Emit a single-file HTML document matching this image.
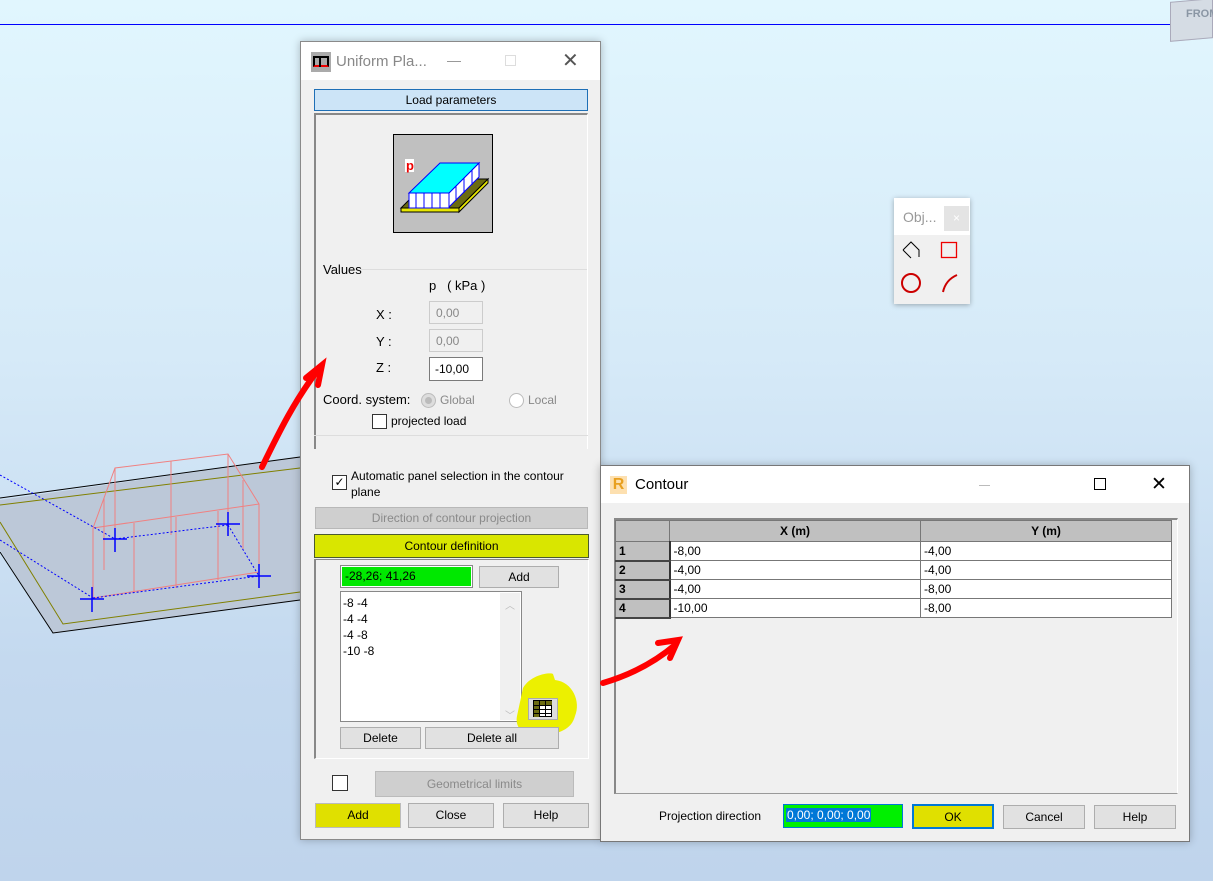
<!DOCTYPE html>
<html><head><meta charset="utf-8"><style>
*{box-sizing:border-box;margin:0;padding:0}
body{width:1213px;height:881px;overflow:hidden;position:relative;font-family:"Liberation Sans",sans-serif;font-size:12px;color:#000;background:linear-gradient(#e1f6fe 0%,#d6eaf8 40%,#c4d9ef 75%,#bfd4ec 100%)}
.a{position:absolute}
.btn{position:absolute;background:#e1e1e1;border:1px solid #adadad;text-align:center;font-size:12px}
.hdr{position:absolute;background:#cfcfcf;border:1px solid #b8b8b8;text-align:center;color:#8a8a8a}
.inp{position:absolute;background:#fff;border:1px solid #7a7a7a;font-size:12px}
table{border-collapse:collapse}
td{border:1px solid #777;height:19px;font-size:12px;padding-left:3px}
th{border:1px solid #777;background:#c0c0c0;height:21px;font-size:12px;font-weight:bold}
td.n{background:#c0c0c0;font-weight:bold;border-right:2px solid #333;border-bottom:2px solid #444}
</style></head><body>
<div class="a" style="left:0;top:24px;width:1213px;height:1px;background:#0000ff"></div>
<div class="a" style="left:1170px;top:0;width:43px;height:40px;background:#d5dce4;border:1px solid #aab;transform:skewY(-5deg)"></div>
<div class="a" style="left:1186px;top:8px;font-size:11px;font-weight:bold;color:#8a96a4">FROM</div>

<svg class="a" style="left:0;top:440px" width="310" height="200">
<polygon points="0,60 300,17 300,160 53,193 0,110" fill="#bcc8d8"/>
<polyline points="0,58 300,17" stroke="#000" fill="none"/>
<polyline points="0,65 300,28" stroke="#808000" fill="none"/>
<polyline points="0,112 53,193 300,160" stroke="#000" fill="none"/>
<polyline points="0,82 63,184 300,152" stroke="#808000" fill="none"/>
<g stroke="#f08080" fill="none">
<polyline points="93,88 115,28 228,14 259,64 259,132"/>
<polyline points="93,88 93,158 259,132"/>
<polyline points="93,88 259,64"/>
<line x1="115" y1="28" x2="115" y2="97"/><line x1="171" y1="21" x2="171" y2="95"/><line x1="228" y1="14" x2="228" y2="85"/>
<line x1="104" y1="58" x2="104" y2="130"/><line x1="243" y1="40" x2="243" y2="110"/>
<line x1="134" y1="83" x2="134" y2="153"/><line x1="176" y1="77" x2="176" y2="148"/><line x1="218" y1="71" x2="218" y2="140"/>
</g>
<g stroke="#0000ff" stroke-dasharray="2,2" fill="none">
<line x1="115" y1="99" x2="228" y2="85"/><line x1="93" y1="158" x2="259" y2="136"/><line x1="228" y1="85" x2="259" y2="136"/>
<line x1="0" y1="35" x2="115" y2="99"/><line x1="0" y1="100" x2="93" y2="158"/>
</g>
<g stroke="#0000ff" stroke-width="1.5">
<line x1="103" y1="99" x2="127" y2="99"/><line x1="115" y1="88" x2="115" y2="112"/>
<line x1="216" y1="84" x2="240" y2="84"/><line x1="228" y1="72" x2="228" y2="96"/>
<line x1="247" y1="136" x2="271" y2="136"/><line x1="259" y1="124" x2="259" y2="148"/>
<line x1="80" y1="159" x2="104" y2="159"/><line x1="92" y1="147" x2="92" y2="172"/>
</g>
</svg>

<div class="a" style="left:300px;top:41px;width:301px;height:799px;background:#f0f0f0;border:1px solid #8a8a8a;box-shadow:0 0 8px rgba(0,0,0,.25)">
 <div class="a" style="left:0;top:0;width:299px;height:38px;background:#fff"></div>
 <div class="a" style="left:10px;top:10px;width:20px;height:20px;background:#aaa"><div class="a" style="left:2px;top:4px;width:16px;height:11px;border:2px solid #000;border-bottom-color:#e00"></div><div class="a" style="left:8px;top:4px;width:2px;height:11px;background:#000"></div></div>
 <div class="a" style="left:35px;top:11px;font-size:15px;color:#888">Uniform Pla...</div>
 <div class="a" style="left:146px;top:19px;width:14px;height:1px;background:#999"></div>
 <div class="a" style="left:204px;top:13px;width:11px;height:11px;border:1px solid #ddd"></div>
 <div class="a" style="left:261px;top:6px;font-size:20px;color:#555">✕</div>
 <div class="a" style="left:13px;top:47px;width:274px;height:22px;background:#cce4f7;border:1px solid #1e6fb6;text-align:center;line-height:20px">Load parameters</div>
 <div class="a" style="left:13px;top:71px;width:274px;height:336px;border-left:2px solid #888;border-top:2px solid #888;border-right:1px solid #fff"></div>
 <div class="a" style="left:92px;top:92px;width:100px;height:99px;background:#c0c0c0;border:1px solid #000">
  <svg width="100" height="99">
   <polygon points="7,73 36,44 94,44 65,73" fill="#6b6b10" stroke="#000"/>
   <polygon points="7,73 65,73 65,77 7,77" fill="#e8e800" stroke="#000"/>
   <polygon points="65,73 94,44 94,48 65,77" fill="#e8e800" stroke="#000"/>
   <polygon points="15,58 55,58 55,73 15,73" fill="#fff" stroke="#00f"/>
   <polygon points="55,58 85,28 85,42 55,72" fill="#fff" stroke="#00f"/>
   <polygon points="15,58 46,28 85,28 55,58" fill="#00ffff" stroke="#00f"/>
   <g stroke="#00f"><line x1="22" y1="58" x2="22" y2="73"/><line x1="30" y1="58" x2="30" y2="73"/><line x1="38" y1="58" x2="38" y2="73"/><line x1="46" y1="58" x2="46" y2="73"/><line x1="62" y1="51" x2="62" y2="66"/><line x1="70" y1="43" x2="70" y2="58"/><line x1="78" y1="35" x2="78" y2="50"/></g>
   <rect x="11" y="24" width="9" height="13" fill="#fff"/><text x="12" y="35" font-size="13" font-weight="bold" fill="#e00" font-family="Liberation Sans">p</text></svg>
 </div>
 <div class="a" style="left:22px;top:220px;font-size:13px">Values</div>
 <div class="a" style="left:60px;top:227px;width:226px;height:1px;background:#ddd"></div>
 <div class="a" style="left:128px;top:236px;font-size:13px">p &nbsp;&nbsp;( kPa )</div>
 <div class="a" style="left:75px;top:265px;font-size:13px">X :</div>
 <div class="a" style="left:75px;top:292px;font-size:13px">Y :</div>
 <div class="a" style="left:75px;top:318px;font-size:13px">Z :</div>
 <div class="inp" style="left:128px;top:259px;width:54px;height:23px;background:#f0f0f0;border-color:#ccc;color:#888;padding:4px 6px">0,00</div>
 <div class="inp" style="left:128px;top:287px;width:54px;height:23px;background:#f0f0f0;border-color:#ccc;color:#888;padding:4px 6px">0,00</div>
 <div class="inp" style="left:128px;top:315px;width:54px;height:24px;padding:4px 5px">-10,00</div>
 <div class="a" style="left:22px;top:350px;font-size:13px">Coord. system:</div>
 <div class="a" style="left:120px;top:351px;width:15px;height:15px;border-radius:50%;border:1px solid #bbb;background:#ddd"><div class="a" style="left:3px;top:3px;width:7px;height:7px;border-radius:50%;background:#bbb"></div></div>
 <div class="a" style="left:139px;top:351px;color:#888">Global</div>
 <div class="a" style="left:208px;top:351px;width:15px;height:15px;border-radius:50%;border:1px solid #bbb;background:#fff"></div>
 <div class="a" style="left:227px;top:351px;color:#888">Local</div>
 <div class="a" style="left:71px;top:372px;width:15px;height:15px;border:1px solid #333;background:#fff"></div>
 <div class="a" style="left:90px;top:372px">projected load</div>
 <div class="a" style="left:13px;top:393px;width:274px;height:1px;background:#ddd"></div>
 <div class="a" style="left:31px;top:433px;width:15px;height:15px;border:1px solid #333;background:#fff;font-size:12px;line-height:13px;text-align:center">✓</div>
 <div class="a" style="left:50px;top:426px;width:240px;line-height:16px">Automatic panel selection in the contour plane</div>
 <div class="hdr" style="left:14px;top:465px;width:273px;height:22px;line-height:20px">Direction of contour projection</div>
 <div class="a" style="left:13px;top:492px;width:275px;height:24px;background:#d9e600;border:1px solid #4a5a30;text-align:center;line-height:22px">Contour definition</div>
 <div class="a" style="left:13px;top:517px;width:275px;height:200px;border-left:2px solid #888;border-top:1px solid #888;border-right:1px solid #fff;border-bottom:1px solid #fff"></div>
 <div class="a" style="left:39px;top:523px;width:133px;height:23px;border:1px solid #888;background:#fff;padding:1px"><div style="background:#00e800;height:19px;padding:2px 3px">-28,26; 41,26</div></div>
 <div class="btn" style="left:178px;top:524px;width:80px;height:22px;line-height:20px">Add</div>
 <div class="a" style="left:39px;top:549px;width:182px;height:131px;border:1px solid #888;background:#fff;padding:3px 2px;line-height:16px">-8 -4<br>-4 -4<br>-4 -8<br>-10 -8</div>
 <div class="a" style="left:199px;top:551px;width:20px;height:127px;background:#f0f0f0;color:#bbb;text-align:center;font-size:10px"><div style="margin-top:4px">︿</div><div style="margin-top:95px">﹀</div></div>
 <svg class="a" style="left:212px;top:630px" width="70" height="66"><path d="M10,16 C18,2 38,0 40,2 L42,8 C60,10 68,30 62,44 C58,60 40,64 20,62 C8,62 2,54 4,44 Z" fill="#ecf000"/></svg>
 <div class="a" style="left:227px;top:656px;width:30px;height:22px;border:1px solid #aaa;background:#ddd"></div>
 <svg class="a" style="left:232px;top:658px" width="20" height="18"><rect x="0.5" y="0.5" width="18" height="16" fill="#fff" stroke="#000"/><rect x="1" y="1" width="18" height="4" fill="#6b6b10"/><rect x="1" y="1" width="5" height="16" fill="#6b6b10"/><path d="M0.5 5.5H19M0.5 9.5H19M0.5 13.5H19M6.5 0V17M12.5 0V17" stroke="#000"/></svg>
 <div class="btn" style="left:39px;top:685px;width:81px;height:22px;line-height:20px">Delete</div>
 <div class="btn" style="left:124px;top:685px;width:134px;height:22px;line-height:20px">Delete all</div>
 <div class="a" style="left:31px;top:733px;width:16px;height:16px;border:1px solid #333;background:#fff"></div>
 <div class="hdr" style="left:74px;top:729px;width:199px;height:26px;line-height:24px;border-color:#bbb">Geometrical limits</div>
 <div class="btn" style="left:14px;top:761px;width:86px;height:25px;line-height:23px;background:#e0e000;border-color:#bbb">Add</div>
 <div class="btn" style="left:107px;top:761px;width:86px;height:25px;line-height:23px">Close</div>
 <div class="btn" style="left:202px;top:761px;width:86px;height:25px;line-height:23px">Help</div>
</div>

<div class="a" style="left:894px;top:198px;width:76px;height:106px;background:#f0f0f0;box-shadow:0 1px 5px rgba(0,0,0,.3)">
 <div class="a" style="left:0;top:0;width:76px;height:37px;background:#fff"></div>
 <div class="a" style="left:9px;top:11px;font-size:14px;color:#999">Obj...</div>
 <div class="a" style="left:50px;top:8px;width:25px;height:25px;background:#e4e4e4;color:#fff;text-align:center;line-height:25px">×</div>
 <svg class="a" style="left:0;top:37px" width="76" height="69"><path d="M9,15 L17,7 L25,15 L25,22 M9,15 L17,23" stroke="#000" fill="none"/><rect x="47.5" y="7.5" width="15" height="15" stroke="#e00" fill="none" stroke-width="1.3"/><circle cx="17" cy="48" r="9" stroke="#c00" stroke-width="2" fill="none"/><path d="M49,57 C51,48 56,43 63,40" stroke="#c00" stroke-width="2" fill="none"/></svg>
</div>

<div class="a" style="left:600px;top:465px;width:590px;height:377px;background:#f0f0f0;border:1px solid #777;box-shadow:0 0 8px rgba(0,0,0,.25)">
 <div class="a" style="left:0;top:0;width:588px;height:37px;background:#fff"></div>
 <div class="a" style="left:9px;top:10px;width:17px;height:18px;background:#fde0b0;color:#e8a020;font-weight:bold;font-size:16px;line-height:18px;text-align:center">R</div>
 <div class="a" style="left:34px;top:10px;font-size:15px">Contour</div>
 <div class="a" style="left:378px;top:19px;width:11px;height:1px;background:#bbb"></div>
 <div class="a" style="left:493px;top:12px;width:12px;height:12px;border:1px solid #000"></div>
 <div class="a" style="left:550px;top:7px;font-size:19px;color:#000">✕</div>
 <div class="a" style="left:13px;top:52px;width:564px;height:276px;border:1px solid #999;border-top:2px solid #888;border-left:2px solid #888;border-right:1px solid #fff"></div>
 <table class="a" style="left:14px;top:54px;width:557px">
  <tr><th style="width:54px"></th><th style="width:251px">X (m)</th><th>Y (m)</th></tr>
  <tr><td class="n">1</td><td style="background:#fff">-8,00</td><td style="background:#fff">-4,00</td></tr>
  <tr><td class="n">2</td><td style="background:#fff">-4,00</td><td style="background:#fff">-4,00</td></tr>
  <tr><td class="n">3</td><td style="background:#fff">-4,00</td><td style="background:#fff">-8,00</td></tr>
  <tr><td class="n">4</td><td style="background:#fff">-10,00</td><td style="background:#fff">-8,00</td></tr>
 </table>
 <div class="a" style="left:58px;top:343px">Projection direction</div>
 <div class="a" style="left:182px;top:338px;width:120px;height:24px;border:1px solid #0078d7;background:#00f000;padding:2px"><span style="background:#0078d7;color:#fff;font-size:12px;line-height:17px;padding:0 1px">0,00; 0,00; 0,00</span></div>
 <div class="btn" style="left:311px;top:338px;width:82px;height:25px;line-height:23px;background:#e0e000;border:2px solid #0078d7">OK</div>
 <div class="btn" style="left:402px;top:339px;width:82px;height:24px;line-height:22px">Cancel</div>
 <div class="btn" style="left:493px;top:339px;width:82px;height:24px;line-height:22px">Help</div>
</div>

<svg class="a" style="left:0;top:0" width="1213" height="881" fill="none" stroke="#f00" stroke-width="6" stroke-linecap="round">
<path d="M262,467 C280,430 295,400 318,370"/><path d="M306,378 L322,365 L318,385"/>
<path d="M603,683 C630,675 655,662 675,645"/><path d="M658,643 L678,640 L670,658"/>
</svg>
</body></html>
